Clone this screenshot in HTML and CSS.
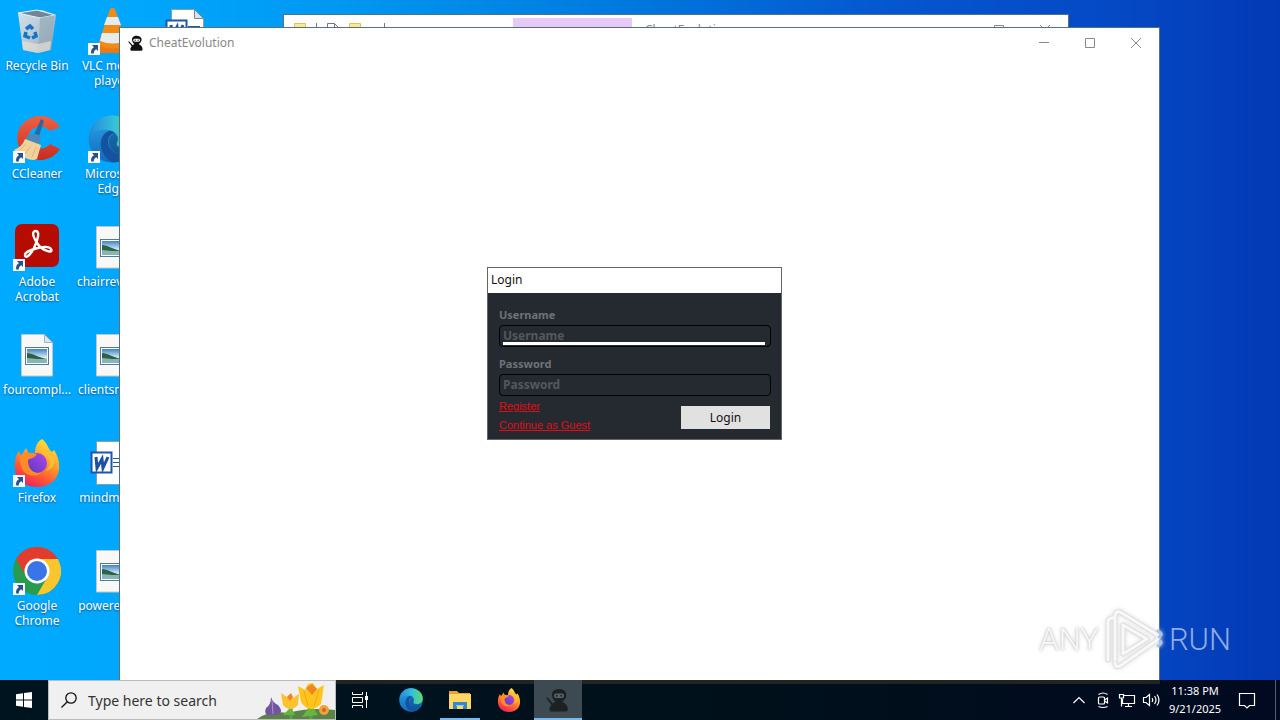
FILE: index.html
```html
<!DOCTYPE html>
<html lang="en">
<head>
<meta charset="utf-8">
<title>Desktop</title>
<link rel="stylesheet" href="styles.css">
</head>
<body>
<svg class="defs" aria-hidden="true">
  <defs>
    <linearGradient id="g-sky" x1="0" y1="0" x2="0" y2="1"><stop offset="0" stop-color="#3f83c4"/><stop offset=".6" stop-color="#d5ecf5"/></linearGradient>
    <linearGradient id="g-bin" x1="0" y1="0" x2="1" y2="1"><stop offset="0" stop-color="#d3e3ee"/><stop offset=".55" stop-color="#b5c6d2"/><stop offset="1" stop-color="#8397a8"/></linearGradient>
    <linearGradient id="g-e1" x1="0" y1="0" x2="1" y2="0"><stop offset="0" stop-color="#2389dc"/><stop offset=".55" stop-color="#35c1d8"/><stop offset="1" stop-color="#61d968"/></linearGradient>
    <linearGradient id="g-e2" x1="0" y1="0" x2="0" y2="1"><stop offset="0" stop-color="#2ba4e6"/><stop offset="1" stop-color="#1169c0"/></linearGradient>
    <linearGradient id="g-fx" x1=".8" y1="0" x2=".3" y2="1"><stop offset="0" stop-color="#ffed3c"/><stop offset=".4" stop-color="#ffa22b"/><stop offset=".75" stop-color="#ff5236"/><stop offset="1" stop-color="#eb1e67"/></linearGradient>
    <linearGradient id="g-fp" x1="0" y1="1" x2="1" y2="0"><stop offset="0" stop-color="#583ac0"/><stop offset="1" stop-color="#b245ee"/></linearGradient>
    <linearGradient id="g-cc" x1="0" y1="0" x2="0" y2="1"><stop offset="0" stop-color="#ef6141"/><stop offset="1" stop-color="#c72c22"/></linearGradient>
    <symbol id="shortcut" viewBox="0 0 12 12"><rect width="12" height="12" fill="#f7f9fb"/><path d="M4 2h6v6L8.300 6.300C6.500 7.200 5.700 8.500 5.800 10.500H3.200C2.600 7.500 3.700 5.500 6 4.200z" fill="#27518f"/></symbol>
    <symbol id="picture" viewBox="0 0 48 48"><path d="M8.500 3.500h23l8 8v33.500h-31z" fill="#f8f8f7" stroke="#bfc7cc"/><path d="M31.500 3.500v8h8z" fill="#dfe6e9" stroke="#9fb1bc"/><rect x="12.500" y="16.500" width="23" height="17" fill="#fff" stroke="#53779f"/><rect x="14" y="18" width="20" height="14" fill="url(#g-sky)"/><path d="M14 22c5 0 10 4 20 6v1H14z" fill="#2f5f45"/><path d="M14 27c7 1 13 1 20 1v4H14z" fill="#87b5b4"/></symbol>
    <symbol id="word" viewBox="0 0 48 48"><path d="M8.500 2.500h23l9 9v34h-32z" fill="#fff" stroke="#8d9caa"/><path d="M31.500 2.500v9h9z" fill="#dce3e8" stroke="#73889a"/><path d="M25 19.500h12M25 23.500h12M25 27.500h12" stroke="#28599f"/><rect x="3.500" y="13.500" width="20" height="20" fill="#fff" stroke="#1c57ad" stroke-width="2"/><path d="M8 18l1 11 5-9 1 9 5-11" fill="none" stroke="#1b50a4" stroke-width="3"/></symbol>
    <symbol id="edge" viewBox="0 0 48 48"><circle cx="24" cy="24" r="23.500" fill="url(#g-e2)"/><path d="M1 21C3 8 12 .5 24 .5S47.500 9 47.500 20c0 8-5 12-12 12-5 0-8-2-6-5 2-4 0-11-9-12C11 14 4 17 1 21z" fill="url(#g-e1)"/><path d="M21 16C10 19 9 40 25 47.500c8 0 15-4 19-10-14 4-24-1-24-11 0-5 3-8 7-8-2-2-4-3-6-2.500z" fill="#14539f"/><path d="M29 27c-2 4 1 7 8 6 5-1 8-3 9-5-1 5-3 8-5 10-12 3-20-3-20-11 0-5 3-8 6-8 3 2 3 5 2 8z" fill="#0b2440" opacity=".35"/></symbol>
    <symbol id="firefox" viewBox="0 0 48 48"><path d="M29 0c7 6 5 9 10 13l2-2c9 13 8 36-17 37C9 48 0 37 2 24c0-6 2-9 4-12l2 5 5-8 3 6c2-1 4-1 6-1 0-6 2-11 7-14z" fill="url(#g-fx)"/><circle cx="24" cy="24" r="10" fill="url(#g-fp)"/><path d="M6 18c5-7 11-4 18-3-2 4-6 4-9 6 0 8 4 14 13 13-5 5-19 3-20-8z" fill="#ff8b26"/><path d="M27 14c8 0 14 10 6 18 10-3 11-14 5-19-4-3-8-2-11 1z" fill="#ffbd31"/></symbol>
    <symbol id="chrome" viewBox="0 0 48 48"><circle cx="24" cy="24" r="24" fill="#269c4c"/><path d="M3.200 12A24 24 0 0 1 44.800 12H24a12 12 0 0 0-10.400 18z" fill="#e33b2e"/><path d="M44.800 12A24 24 0 0 1 24 48l10.400-18A12 12 0 0 0 24 12z" fill="#fbc62d"/><circle cx="24" cy="24" r="12.500" fill="#fff"/><circle cx="24" cy="24" r="10" fill="#3975e6"/></symbol>
    <symbol id="ninja" viewBox="0 0 24 24"><path d="M13 1C7 1 5 5 6.500 9.500c.8 2.500 2 3.500 3 4L7 15.500 1.500 9.500.3 10.300 5.500 17C3 20 3 22 4.500 23.500h16c3-1.500 1-7.500-4.500-10C20 11.500 21 8 20 5c-1-2.500-3.500-4-7-4z" fill="currentColor"/><rect x="8" y="5.500" width="10" height="4.500" rx="2.200" class="visor"/><circle cx="10.800" cy="7.700" r="1" fill="currentColor"/><circle cx="15.200" cy="7.700" r="1" fill="currentColor"/></symbol>
    <symbol id="max" viewBox="0 0 10 10"><path d="M.5.5h9v9h-9z" fill="none" stroke="currentColor"/></symbol>
    <symbol id="close" viewBox="0 0 10 10"><path d="M0 0l10 10M10 0L0 10" fill="none" stroke="currentColor"/></symbol>
    <symbol id="min" viewBox="0 0 10 10"><path d="M0 4.500h10" stroke="currentColor"/></symbol>
    <symbol id="minifolder" viewBox="0 0 12 14"><path d="M.5.500h11v13H.5z" fill="#ffe693" stroke="#e5be55"/></symbol>
  </defs>
</svg>

<div class="screen">
  <main class="desktop">
    <div class="icons">
      <div class="item"><span class="pic"><svg viewBox="0 0 48 48"><path d="M5 6L29 3l14 5-5 35-13 3-15-3z" fill="url(#g-bin)"/><path d="M5 6l19-3 18 5-15 3z" fill="#6f8799" stroke="#e9f2f8"/><path d="M27 11l15-3-5 35-12 3z" fill="#94a9b8" opacity=".7"/><path d="M9 34l16 3 13-3-1 9-12 3-15-3z" fill="#e7dfd6" opacity=".7"/><path d="M13 22l4-3 3 3M22 25l1 4-4 2M17 31l-5-2 1-4" fill="none" stroke="#1475c8" stroke-width="3.500"/></svg></span><span class="name">Recycle Bin</span></div>
      <div class="item"><span class="pic"><svg viewBox="0 0 48 48"><path d="M5 41q-4 0-3 3 1 2 4 2h43V37H8z" fill="#ec7a10"/><path d="M22 2q2-2 5 0l12 36q-15 7-29 0z" fill="#f28b16"/><path d="M19 10h11l3 8H16zM14 26h21l3 8q-13 5-26 0z" fill="#e6ebed"/></svg><svg class="arrow"><use href="#shortcut"/></svg></span><span class="name">VLC media player</span></div>
      <div class="item"><span class="pic"><svg viewBox="0 0 48 48"><path d="M47 12A23 22 0 1 0 47 34L37 29a12 11 0 1 1 0-13z" fill="url(#g-cc)"/><path d="M28 4l3 2-6 18-5-2z" fill="#246aa7"/><path d="M14 21q8-5 14 1l-2 9-14-5z" fill="#498abc"/><path d="M12 24l16 6-4 14q-9 4-23-9 8-3 11-11z" fill="#f2d19b"/><path d="M13 29l-6 6M18 31l-6 8M23 32l-4 10" stroke="#e0b57d" fill="none"/></svg><svg class="arrow"><use href="#shortcut"/></svg></span><span class="name">CCleaner</span></div>
      <div class="item"><span class="pic"><svg><use href="#edge"/></svg><svg class="arrow"><use href="#shortcut"/></svg></span><span class="name">Microsoft Edge</span></div>
      <div class="item"><span class="pic"><svg viewBox="0 0 48 48"><rect x="2" y="1" width="44" height="43" rx="7" fill="#b50b00"/><path d="M12 32c0-5 23-11 26-6s-9 2-14-6-5-12-1-12 2 9-2 17-9 11-9 7z" fill="none" stroke="#fff" stroke-width="2.400"/></svg><svg class="arrow"><use href="#shortcut"/></svg></span><span class="name">Adobe Acrobat</span></div>
      <div class="item"><span class="pic"><svg><use href="#picture"/></svg></span><span class="name">chairreven...</span></div>
      <div class="item"><span class="pic"><svg><use href="#picture"/></svg></span><span class="name">fourcompl...</span></div>
      <div class="item"><span class="pic"><svg><use href="#picture"/></svg></span><span class="name">clientsmar...</span></div>
      <div class="item"><span class="pic"><svg><use href="#firefox"/></svg><svg class="arrow"><use href="#shortcut"/></svg></span><span class="name">Firefox</span></div>
      <div class="item"><span class="pic"><svg><use href="#word"/></svg></span><span class="name">mindmod...</span></div>
      <div class="item"><span class="pic"><svg><use href="#chrome"/></svg><svg class="arrow"><use href="#shortcut"/></svg></span><span class="name">Google Chrome</span></div>
      <div class="item"><span class="pic"><svg><use href="#picture"/></svg></span><span class="name">poweredit...</span></div>
      <div class="item third"><span class="pic"><svg><use href="#word"/></svg></span></div>
    </div>

    <section class="window explorer">
      <header class="titlebar">
        <div class="quick">
          <svg class="folder"><use href="#minifolder"/></svg><i class="bar"></i>
          <svg class="folder" viewBox="0 0 12 14"><path d="M.5.500h7l4 4v9H.5zM7.500.500v4h4" fill="#fff" stroke="#777"/></svg>
          <svg class="folder"><use href="#minifolder"/></svg><i class="bar"></i>
        </div>
        <div class="tooltab"></div>
        <span class="caption">CheatEvolution</span>
        <div class="controls">
          <button aria-label="Maximize"><svg><use href="#max"/></svg></button>
          <button aria-label="Close"><svg><use href="#close"/></svg></button>
        </div>
      </header>
    </section>

    <section class="window app">
      <header class="titlebar">
        <svg class="appicon"><use href="#ninja"/></svg>
        <span class="caption">CheatEvolution</span>
        <div class="controls">
          <button aria-label="Minimize"><svg><use href="#min"/></svg></button>
          <button aria-label="Maximize"><svg><use href="#max"/></svg></button>
          <button aria-label="Close"><svg><use href="#close"/></svg></button>
        </div>
      </header>
    </section>

    <form class="login">
      <h1>Login</h1>
      <div class="fields">
        <label for="user">Username</label>
        <input class="active" id="user" type="text" placeholder="Username">
        <label for="pass">Password</label>
        <input id="pass" type="password" placeholder="Password">
        <div class="actions">
          <nav><a href="#">Register</a><a href="#">Continue as Guest</a></nav>
          <button type="button">Login</button>
        </div>
      </div>
    </form>

    <div class="watermark">
      <span class="any">ANY</span>
      <svg viewBox="0 0 58 64"><g fill="none" stroke-linejoin="round" stroke-linecap="round"><path d="M3 52V14q0-4 5-4M10 52V8q0-5 5-4l36 22q4 3 0 7L15 58q-5 2-5-3M18 46V17l24 14z" stroke="#dedede" stroke-width="5"/><path d="M3 52V14q0-4 5-4M10 52V8q0-5 5-4l36 22q4 3 0 7L15 58q-5 2-5-3M18 46V17l24 14z" stroke="#f8f8f8" stroke-width="3"/><path d="M53 23q6 3 1 6M53 38q5-3 2-5" stroke="#a8c2ec" stroke-width="3"/></g></svg>
      <span class="run">RUN</span>
    </div>
  </main>

  <footer class="taskbar">
    <button class="start" aria-label="Start"><svg viewBox="0 0 16 16"><path d="M0 2.300l7-1v6.200H0zM8 1.100L16 0v7.500H8zM0 8.500h7v6.200l-7-1zM8 8.500h8V16l-8-1.100z" fill="#fff"/></svg></button>
    <div class="search">
      <svg class="lens" viewBox="0 0 16 16"><circle cx="10" cy="6" r="5.200" fill="none" stroke="#111" stroke-width="1.300"/><path d="M6.300 9.700L.5 15.500" stroke="#111" stroke-width="1.300"/></svg>
      <input type="text" placeholder="Type here to search" aria-label="Type here to search">
      <svg class="flowers" viewBox="0 0 80 38"><path d="M2 38q12-9 31-6 21-6 47-3v9z" fill="#588545"/><path d="M36 38V25M56 38V14" stroke="#55a83b" stroke-width="3"/><path d="M28 34l8-8 4 8M47 36l9-13 7 11" fill="#69b344"/><path d="M16 16q2 6 7 8 7 8-2 10-14 2-10-7 5-3 5-11z" fill="#7354a1"/><path d="M17 19l1 14" stroke="#b190ca"/><path d="M26 12l6 4 3-3 3 4 6-4-1 11q-8 8-15 0z" fill="#ffc12c"/><path d="M43 5l7 4 3-6 5-1 4 6 7-4-3 19q-12 11-20-2z" fill="#ffc51b"/><path d="M51 7l6-4 5 5-5 6zM32 16l4-4 2 4-3 4z" fill="#ee8624"/><path d="M49 10l4 15M64 9l-5 16" stroke="#f2a51b" fill="none"/><circle cx="69" cy="29" r="5" fill="#f4a03c"/><circle cx="69" cy="29" r="2" fill="#c9682d"/></svg>
    </div>
    <button class="task" aria-label="Task view"><svg viewBox="0 0 18 18"><path d="M1.500 1v2.500h10V1M1.500 17v-2.500h10V17M1.500 6.500h10v5h-10zM15.500 1v16" fill="none" stroke="#fff"/><path d="M14 5h3v4h-3z" fill="#fff"/></svg></button>
    <div class="tasks">
      <button class="task" aria-label="Edge"><svg class="large"><use href="#edge"/></svg></button>
      <button class="task running" aria-label="File Explorer"><svg class="large" viewBox="0 0 24 24"><path d="M1 3h8l2 2h11v4H1z" fill="#e9a22f"/><path d="M1 6h22v15H1z" fill="#ffd765"/><path d="M5 14h14v7h-4v-3H9v3H5z" fill="#3588c8"/><path d="M8 17h8v1H8z" fill="#8bc8ee"/></svg></button>
      <button class="task" aria-label="Firefox"><svg class="large"><use href="#firefox"/></svg></button>
      <button class="task running current" aria-label="CheatEvolution"><svg class="large"><use href="#ninja"/></svg></button>
    </div>
    <div class="tray">
      <button aria-label="Hidden icons"><svg viewBox="0 0 18 18"><path d="M3.500 12L9 6.500l5.500 5.500" class="line"/></svg></button>
      <button aria-label="Camera"><svg viewBox="0 0 18 18"><rect x="4.500" y="6" width="6" height="7" rx="1" class="line"/><path d="M10.500 9l3-2v5l-3-2M4.500 3.500q4.500-3 9 0M4.500 15.500q4.500 2 9 0" class="line"/></svg></button>
      <button aria-label="Network"><svg viewBox="0 0 18 18"><path d="M5.500 4.500h11v8h-12V8M10.500 12.500v3M7 15.500h7M1.500 3.500h4V7h-4zM3.500 7v8.500" class="line"/></svg></button>
      <button aria-label="Volume"><svg viewBox="0 0 18 18"><path d="M1.500 6.500h2.500l3.500-3v11l-3.500-3H1.500zM10 7q1.500 2 0 4M12.500 5q3 4 0 8M15 3.500q4 5.500 0 11" class="line"/></svg></button>
    </div>
    <div class="clock"><time>11:38 PM</time><time>9/21/2025</time></div>
    <button class="task" aria-label="Notifications"><svg viewBox="0 0 18 18"><path d="M1.500 2.500h15v12h-5L9 17l-2.500-2.500h-5z" class="line"/></svg></button>
    <div class="peek"></div>
  </footer>
</div>
</body>
</html>
```
FILE: styles.css
```css
* { box-sizing: border-box; }
body { margin: 0; font: 12px/15px "Noto Sans", "Open Sans", sans-serif; }
button { border: 0; padding: 0; background: none; font: inherit; color: inherit; display: flex; align-items: center; justify-content: center; }
svg { display: block; }
.defs { position: absolute; width: 0; height: 0; }

.screen { height: 100vh; display: flex; flex-direction: column; overflow: hidden; }
.desktop { position: relative; flex: 1; min-height: 0; background: linear-gradient(90deg, #00abff 0, #00a6fc 12%, #0096f0 28%, #007ade 48%, #0556cf 70%, #0548c4 88%, #0339b5 100%); }

.icons { display: grid; grid-template-columns: 74px 75px 75px; grid-auto-rows: 108px; width: 224px; }
.item { display: flex; flex-direction: column; align-items: center; gap: 3px; padding-top: 7px; color: #fff; text-align: center; text-shadow: 0 1px 2px #00508a; }
.item:nth-child(2n + 1) { grid-column: 1; }
.item:nth-child(2n) { grid-column: 2; }
.item.third { grid-column: 3; grid-row: 1; }
.pic { position: relative; width: 48px; height: 48px; }
.pic svg { width: 48px; height: 48px; overflow: visible; }
.pic .arrow { position: absolute; left: 0; bottom: 0; width: 12px; height: 12px; }

.window { position: absolute; background: #fff; color: #888; border: 1px solid #56707e; border-bottom: 0; }
.explorer { left: 283px; right: 211px; top: 14px; height: 200px; }
.app { left: 119px; right: 120px; top: 27px; bottom: 0; }
.titlebar { height: 29px; display: flex; align-items: center; }
.caption { flex: 1; }
.appicon { width: 16px; height: 16px; margin: 0 5px 0 8px; color: #111; }
.visor { fill: var(--visor, #fff); }
.controls { display: flex; align-self: stretch; }
.controls button { width: 46px; }
.controls svg { width: 10px; height: 10px; }
.quick { width: 229px; display: flex; align-items: center; gap: 10px; padding-left: 10px; }
.folder { width: 12px; height: 14px; }
.bar { width: 1px; height: 14px; background: #777; }
.quick .bar:last-child { margin-left: 13px; }
.tooltab { width: 119px; height: 26px; align-self: flex-end; margin-right: 13px; background: #e7c9f7; }

.login { position: absolute; left: 487px; top: 267px; width: 295px; border: 1px solid #666; background: #252a30; }
.login h1 { margin: 0; padding: 0 3px 1px; background: #fff; color: #111; font-size: 12px; font-weight: 400; line-height: 24px; }
.fields { display: flex; flex-direction: column; padding: 15px 10px 4px 11px; }
.fields label { color: #6d737a; font-size: 11px; font-weight: 700; line-height: 14px; margin-bottom: 3px; }
.fields input { height: 22px; margin: 0 0 10px; padding: 0 3px 2px; border: 1px solid #000; border-radius: 4px; outline: 0; background: transparent; color: #ddd; font: 700 12px "Noto Sans", sans-serif; }
.fields input:last-of-type { margin-bottom: 1px; }
.fields input::placeholder { color: #54585d; opacity: 1; }
.fields .active { background: linear-gradient(#fff, #fff) no-repeat 3px 16px / calc(100% - 8px) 3px; }
.actions { display: flex; justify-content: space-between; align-items: flex-start; }
.actions nav { display: flex; flex-direction: column; }
.actions a { color: #e30b16; font: 11px/19px "Liberation Sans", sans-serif; }
.actions button { width: 89px; height: 23px; margin: 9px 1px 0 0; background: #e1e1e1; color: #111; }

.watermark { position: absolute; right: 49px; bottom: 8px; display: flex; align-items: center; gap: 6px; font: 300 31px/64px "Roboto", sans-serif; }
.watermark svg { width: 58px; height: 64px; filter: drop-shadow(0 0 2px #ddd); }
.any { color: #f8f8f8; text-shadow: 0 0 2px #bbb, 0 0 4px #ccc; }
.run { color: #8eace2; }

.taskbar { height: 40px; flex: none; display: flex; background: linear-gradient(#222422, #222422) no-repeat 120px 0 / calc(100% - 240px) 4px, linear-gradient(90deg, #00141f, #00101b 60%, #010a20); color: #fff; }
.start { width: 48px; }
.start svg { width: 16px; height: 16px; }
.search { width: 288px; display: flex; align-items: center; padding-left: 12px; background: #f0f0f0; border: 1px solid #bbb; }
.lens { width: 16px; height: 16px; flex: none; }
.search input { flex: 1; min-width: 0; margin: 0; padding: 0 0 0 11px; border: 0; outline: 0; background: none; font: 14px "Noto Sans", sans-serif; }
.search input::placeholder { color: #333; opacity: 1; }
.flowers { width: 80px; height: 38px; flex: none; }
.task { width: 48px; position: relative; }
.task svg { width: 18px; height: 18px; }
.task .large { width: 24px; height: 24px; }
.tasks { display: flex; gap: 1px; margin-left: 3px; }
.running::after { content: ""; position: absolute; left: 4px; right: 4px; bottom: 0; height: 2px; background: #76b9ed; }
.current { --visor: #59646a; background: #3d4a52; color: #1c2123; }
.current::after { left: 0; right: 0; }
.tray { display: flex; margin-left: auto; }
.tray button { width: 24px; }
.tray svg { width: 18px; height: 18px; }
.line { fill: none; stroke: #fff; stroke-width: 1.2; }
.clock { width: 56px; margin-left: 4px; display: flex; flex-direction: column; align-items: center; justify-content: center; line-height: 18px; font-size: 11px; white-space: nowrap; }
.peek { width: 5px; margin-left: 4px; border-left: 1px solid #52606d; }
```
